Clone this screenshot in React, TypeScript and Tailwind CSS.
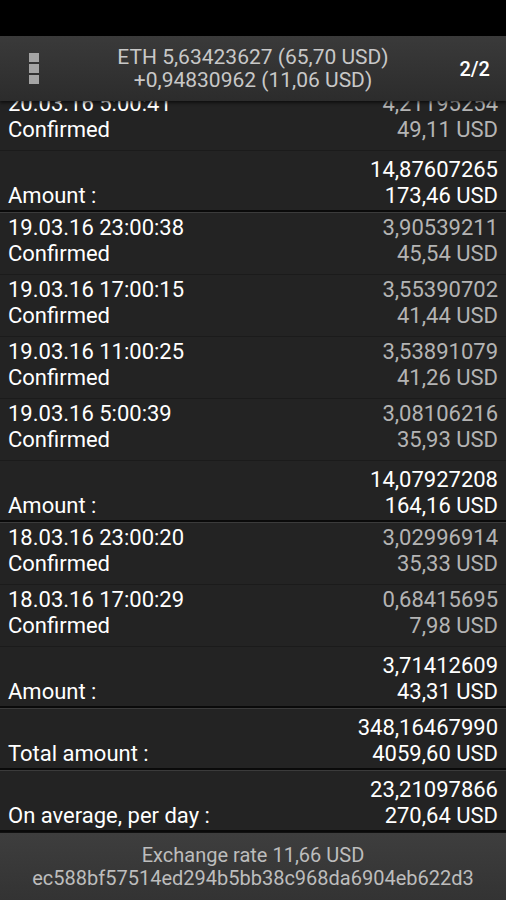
import React from 'react'

type Item =
    | { kind: 'tx'; date: string; eth: string; usd: string }
    | { kind: 'sum'; label: string; eth: string; usd: string }

const items: Item[] = [
    { kind: 'tx', date: '20.03.16 5:00:41', eth: '4,21195254', usd: '49,11 USD' },
    { kind: 'sum', label: 'Amount :', eth: '14,87607265', usd: '173,46 USD' },
    { kind: 'tx', date: '19.03.16 23:00:38', eth: '3,90539211', usd: '45,54 USD' },
    { kind: 'tx', date: '19.03.16 17:00:15', eth: '3,55390702', usd: '41,44 USD' },
    { kind: 'tx', date: '19.03.16 11:00:25', eth: '3,53891079', usd: '41,26 USD' },
    { kind: 'tx', date: '19.03.16 5:00:39', eth: '3,08106216', usd: '35,93 USD' },
    { kind: 'sum', label: 'Amount :', eth: '14,07927208', usd: '164,16 USD' },
    { kind: 'tx', date: '18.03.16 23:00:20', eth: '3,02996914', usd: '35,33 USD' },
    { kind: 'tx', date: '18.03.16 17:00:29', eth: '0,68415695', usd: '7,98 USD' },
    { kind: 'sum', label: 'Amount :', eth: '3,71412609', usd: '43,31 USD' },
    { kind: 'sum', label: 'Total amount :', eth: '348,16467990', usd: '4059,60 USD' },
    { kind: 'sum', label: 'On average, per day :', eth: '23,21097866', usd: '270,64 USD' },
]

const TxRow = ({ date, eth, usd }: { date: string; eth: string; usd: string }) => (
    <div className="h-[62px] px-2 pt-[2px] border-b border-[#1b1b1b] flex justify-between leading-[26px]">
        <div className="text-white">
            <div>{date}</div>
            <div>Confirmed</div>
        </div>
        <div className="text-right text-[#b4b4b4]">
            <div>{eth}</div>
            <div>{usd}</div>
        </div>
    </div>
)

const SumRow = ({ label, eth, usd }: { label: string; eth: string; usd: string }) => (
    <div>
        <div className="h-[59px] px-2 pt-[6px] flex justify-between items-end leading-[26px] text-white">
            <div className="pb-[1px]">{label}</div>
            <div className="text-right pb-[1px]">
                <div>{eth}</div>
                <div>{usd}</div>
            </div>
        </div>
        <div className="h-[2px] bg-[#0a0a0a]" />
        <div className="h-px bg-[#3b3b3b]" />
    </div>
)

const App = () => {
    return (
        <div className="w-[506px] h-[900px] flex flex-col bg-[#232323] font-['Roboto',sans-serif] overflow-hidden">
            <div className="h-[36px] bg-black shrink-0" />

            <div className="h-[65px] shrink-0 flex items-center bg-gradient-to-b from-[#3a3a3a] to-[#2c2c2c] shadow-[0_2px_3px_rgba(0,0,0,0.6)] relative z-10">
                <div className="w-[66px] flex flex-col items-center gap-[2px] pl-[2px]">
                    <div className="w-[10px] h-[9px] bg-[#a4a4a4]" />
                    <div className="w-[10px] h-[9px] bg-[#a4a4a4]" />
                    <div className="w-[10px] h-[9px] bg-[#a4a4a4]" />
                </div>
                <div className="flex-1 text-center text-[21px] leading-[23px] text-[#c8c8c8] pr-[4px]">
                    <div>ETH 5,63423627 (65,70 USD)</div>
                    <div>+0,94830962 (11,06 USD)</div>
                </div>
                <div className="w-[62px] text-[20px] text-white font-medium pr-[16px] text-right">2/2</div>
            </div>

            <div className="h-[731px] shrink-0 overflow-hidden text-[22px]">
                <div className="-mt-[12px]">
                    {items.map((it, i) =>
                        it.kind === 'tx' ? (
                            <TxRow key={i} date={it.date} eth={it.eth} usd={it.usd} />
                        ) : (
                            <SumRow key={i} label={it.label} eth={it.eth} usd={it.usd} />
                        )
                    )}
                </div>
            </div>

            <div className="flex-1 flex flex-col items-center justify-center bg-gradient-to-b from-[#3e3e3e] to-[#333333] text-[20px] leading-[23px] text-[#bdbdbd] border-t border-[#111]">
                <div>Exchange rate 11,66 USD</div>
                <div>ec588bf57514ed294b5bb38c968da6904eb622d3</div>
            </div>
        </div>
    )
}

export default App
